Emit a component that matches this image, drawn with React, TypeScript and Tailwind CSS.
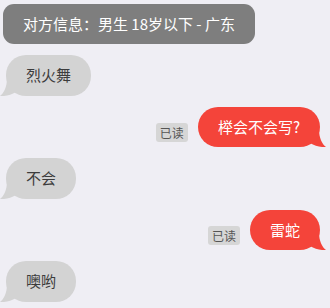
import React from "react";

type Msg =
  | { side: "left"; text: string }
  | { side: "right"; text: string; read?: boolean };

const MESSAGES: Msg[] = [
  { side: "left", text: "烈火舞" },
  { side: "right", text: "榉会不会写?", read: true },
  { side: "left", text: "不会" },
  { side: "right", text: "雷蛇", read: true },
  { side: "left", text: "噢哟" },
];

const Tail: React.FC<{ color: string; side: "left" | "right" }> = ({ color, side }) => (
  <svg
    width="16"
    height="18"
    viewBox="0 0 16 18"
    className={`absolute bottom-0 ${side === "right" ? "right-[-6px]" : "left-[-6px] -scale-x-100"}`}
  >
    <path d="M0 0 H9 C9 9 12 15 16 18 C11 18.5 5 17 0 14 Z" fill={color} />
  </svg>
);

const Bubble: React.FC<{ msg: Msg }> = ({ msg }) => {
  if (msg.side === "left") {
    return (
      <div className="flex shrink-0 ml-[3px]">
        <div className="relative h-[41px] px-[20px] rounded-[20px] bg-[#d3d3d3] text-[#3c3c3c] text-[15px] flex items-center">
          <Tail color="#d3d3d3" side="left" />
          <span className="relative">{msg.text}</span>
        </div>
      </div>
    );
  }
  return (
    <div className="flex shrink-0 justify-end items-end gap-[10px]">
      {msg.read && (
        <span className="mb-[5px] h-[19px] px-[4px] rounded-[3px] bg-[#d6d6d6] text-[#555] text-[12px] leading-[19px]">
          已读
        </span>
      )}
      <div className="relative h-[40px] px-[20px] rounded-[20px] bg-[#f4443a] text-white text-[15px] flex items-center">
        <Tail color="#f4443a" side="right" />
        <span className="relative">{msg.text}</span>
      </div>
    </div>
  );
};

export default function App() {
  return (
    <div
      className="w-[330px] h-[308px] overflow-hidden bg-[#efeef4] pt-[4px] pl-[3px] pr-[10px] flex flex-col"
      style={{ fontFamily: '"Noto Sans CJK SC", "Noto Sans", sans-serif' }}
    >
      <div className="self-start shrink-0 h-[40px] px-5 rounded-[11px] bg-[#7e7e7e] text-white text-[15px] flex items-center">
        对方信息：男生 18岁以下 - 广东
      </div>
      <div className="flex flex-col shrink-0 gap-[11px] mt-[11px]">
        {MESSAGES.map((m, i) => (
          <Bubble key={i} msg={m} />
        ))}
      </div>
      <div className="shrink-0 mt-[4px] ml-[192px] flex items-center gap-[12px] text-[12px] text-[#c4c4c8]">
        <span className="w-[15px] h-[15px] rounded-full border-2 border-[#c4c4c8]" />
        <span>对方已离开聊天</span>
      </div>
    </div>
  );
}
